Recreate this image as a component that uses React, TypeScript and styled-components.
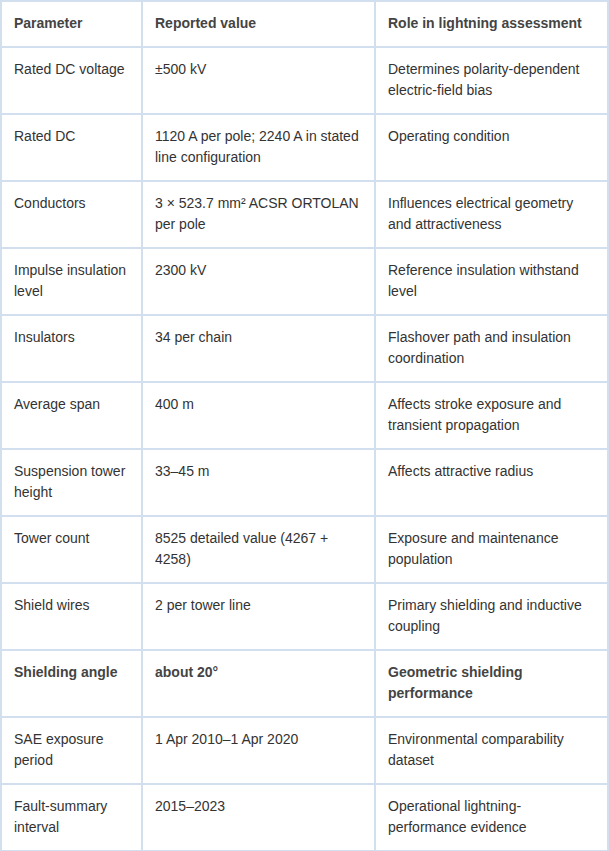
import * as React from 'react';
import styled, { createGlobalStyle } from 'styled-components';

const GlobalStyle = createGlobalStyle`
    html, body {
        margin: 0;
        padding: 0;
        background: #ffffff;
    }
    body {
        font-family: "Liberation Sans", Arial, sans-serif;
        color: #333333;
    }
`;

const Table = styled.table`
    width: 100%;
    border-collapse: collapse;
    table-layout: fixed;
    font-size: 14px;
    line-height: 21px;
    border: 2px solid #d2dfef;
`;

const HeadCell = styled.th`
    text-align: left;
    font-weight: bold;
    color: #444444;
    padding: 11px 12px 12px 12px;
    border: 2px solid #d2dfef;
    vertical-align: top;
`;

const Cell = styled.td<{ $strong?: boolean }>`
    padding: 11px 12px 12px 12px;
    border: 2px solid #d2dfef;
    vertical-align: top;
    height: 42px;
    font-weight: ${p => (p.$strong ? 'bold' : 'normal')};
    color: ${p => (p.$strong ? '#444444' : '#333333')};
`;

interface IRow {
    parameter: string;
    value: string;
    role: string;
    strong?: boolean;
}

const rows: IRow[] = [
    { parameter: 'Rated DC voltage', value: '±500 kV', role: 'Determines polarity-dependent electric-field bias' },
    { parameter: 'Rated DC', value: '1120 A per pole; 2240 A in stated line configuration', role: 'Operating condition' },
    { parameter: 'Conductors', value: '3 × 523.7 mm² ACSR ORTOLAN per pole', role: 'Influences electrical geometry and attractiveness' },
    { parameter: 'Impulse insulation level', value: '2300 kV', role: 'Reference insulation withstand level' },
    { parameter: 'Insulators', value: '34 per chain', role: 'Flashover path and insulation coordination' },
    { parameter: 'Average span', value: '400 m', role: 'Affects stroke exposure and transient propagation' },
    { parameter: 'Suspension tower height', value: '33–45 m', role: 'Affects attractive radius' },
    { parameter: 'Tower count', value: '8525 detailed value (4267 + 4258)', role: 'Exposure and maintenance population' },
    { parameter: 'Shield wires', value: '2 per tower line', role: 'Primary shielding and inductive coupling' },
    { parameter: 'Shielding angle', value: 'about 20°', role: 'Geometric shielding performance', strong: true },
    { parameter: 'SAE exposure period', value: '1 Apr 2010–1 Apr 2020', role: 'Environmental comparability dataset' },
    { parameter: 'Fault-summary interval', value: '2015–2023', role: 'Operational lightning-performance evidence' },
];

export default function App() {
    return (
        <>
            <GlobalStyle />
            <Table>
                <colgroup>
                    <col style={{ width: 141 }} />
                    <col style={{ width: 233 }} />
                    <col />
                </colgroup>
                <thead>
                    <tr>
                        <HeadCell>Parameter</HeadCell>
                        <HeadCell>Reported value</HeadCell>
                        <HeadCell>Role in lightning assessment</HeadCell>
                    </tr>
                </thead>
                <tbody>
                    {rows.map(r => (
                        <tr key={r.parameter}>
                            <Cell $strong={r.strong}>{r.parameter}</Cell>
                            <Cell $strong={r.strong}>{r.value}</Cell>
                            <Cell $strong={r.strong}>{r.role}</Cell>
                        </tr>
                    ))}
                </tbody>
            </Table>
        </>
    );
}
